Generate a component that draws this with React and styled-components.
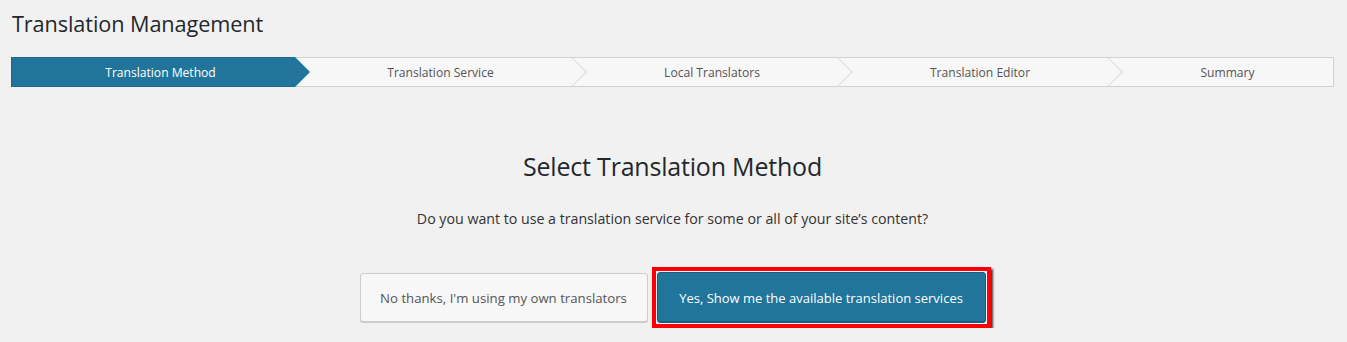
import styled, { createGlobalStyle } from "styled-components";

const GlobalStyle = createGlobalStyle`
  html, body {
    margin: 0;
    padding: 0;
    background: #f1f1f1;
  }
  body {
    font-family: "Open Sans", "Noto Sans", sans-serif;
    color: #23282d;
  }
`;

const Page = styled.div`
  padding: 0 13px 0 11px;
  width: 1323px;
`;

const Title = styled.h1`
  margin: 9px 0 0 1px;
  font-size: 21.7px;
  font-weight: 400;
  line-height: 30px;
  color: #23282d;
  letter-spacing: -0.1px;
`;

const Stepper = styled.ol`
  display: flex;
  list-style: none;
  margin: 18px 0 0;
  padding: 0;
  height: 30px;
`;

const Step = styled.li`
  position: relative;
  box-sizing: border-box;
  flex: 0 0 ${(p) => p.$width}px;
  height: 30px;
  padding-left: 14px;
  display: flex;
  align-items: center;
  justify-content: center;
  font-size: 12.1px;
  color: ${(p) => (p.$active ? "#fff" : "#555")};
  background: ${(p) => (p.$active ? "#21759b" : "#f7f7f7")};
  border-top: 1px solid ${(p) => (p.$active ? "#1b6a8e" : "#d2d2d2")};
  border-bottom: 1px solid ${(p) => (p.$active ? "#1b6a8e" : "#d2d2d2")};
  border-left: ${(p) => (p.$first ? `1px solid ${p.$active ? "#1b6a8e" : "#d2d2d2"}` : "none")};
  border-right: ${(p) => (p.$last ? "1px solid #d2d2d2" : "none")};

  &::after {
    content: "";
    position: absolute;
    display: ${(p) => (p.$last ? "none" : "block")};
    z-index: 1;
    ${(p) =>
      p.$active
        ? `
      left: 100%;
      top: -1px;
      width: 15px;
      height: 30px;
      background: #21759b;
      clip-path: polygon(0 0, 100% 50%, 0 100%);
    `
        : `
      left: 100%;
      top: 50%;
      width: 20px;
      height: 20px;
      border-top: 1px solid #dcdcdc;
      border-right: 1px solid #dcdcdc;
      transform: translate(-50%, -50%) rotate(45deg);
    `}
  }
`;

const Body = styled.section`
  display: flex;
  flex-direction: column;
  align-items: center;
  padding-top: 62px;
`;

const Heading = styled.h2`
  margin: 0;
  font-size: 25px;
  font-weight: 400;
  line-height: 34px;
  color: #23282d;
  letter-spacing: -0.2px;
`;

const Question = styled.p`
  margin: 26px 0 0;
  font-size: 14.2px;
  line-height: 20px;
  color: #333;
`;

const Actions = styled.div`
  display: flex;
  align-items: center;
  gap: 4px;
  margin: 38px 0 0 5px;
`;

const Button = styled.button`
  box-sizing: border-box;
  font-family: "Open Sans", "Noto Sans", sans-serif;
  font-size: ${(p) => (p.$primary ? 13 : 13.2)}px;
  border-radius: 3px;
  cursor: pointer;
  padding: 0;
  width: ${(p) => p.$width}px;
  height: ${(p) => p.$height}px;
  ${(p) =>
    p.$primary
      ? `
    background: #21759b;
    color: #fff;
    border: 1px solid #135e83;
    box-shadow: inset 0 -1px 0 #1a5f80;
  `
      : `
    background: #f7f7f7;
    color: #555;
    border: 1px solid #cccccc;
    box-shadow: 0 1px 0 #cccccc;
  `}
`;

const Highlight = styled.div`
  border: 4px solid #ff0000;
  padding: 1px;
  background: #f4f4f4;
  box-shadow: 2px 2px 2px rgba(0, 0, 0, 0.75);
  display: flex;
`;

const steps = [
  { label: "Translation Method", width: 284 },
  { label: "Translation Service", width: 277 },
  { label: "Local Translators", width: 266 },
  { label: "Translation Editor", width: 270 },
  { label: "Summary", width: 226 },
];

export default function App() {
  return (
    <Page>
      <GlobalStyle />
      <Title>Translation Management</Title>
      <Stepper>
        {steps.map((s, i) => (
          <Step
            key={s.label}
            $width={s.width}
            $active={i === 0}
            $first={i === 0}
            $last={i === steps.length - 1}
          >
            {s.label}
          </Step>
        ))}
      </Stepper>
      <Body>
        <Heading>Select Translation Method</Heading>
        <Question>
          Do you want to use a translation service for some or all of your site’s content?
        </Question>
        <Actions>
          <Button $width={288} $height={49}>
            No thanks, I'm using my own translators
          </Button>
          <Highlight>
            <Button $primary $width={329} $height={51}>
              Yes, Show me the available translation services
            </Button>
          </Highlight>
        </Actions>
      </Body>
    </Page>
  );
}
